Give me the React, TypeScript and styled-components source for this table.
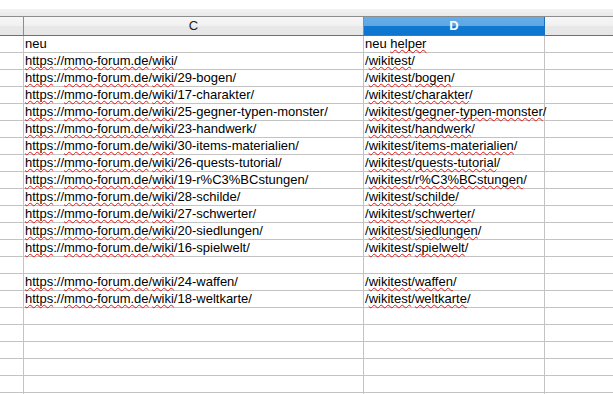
import React from 'react'
import styled, { createGlobalStyle } from 'styled-components'

const GlobalStyle = createGlobalStyle`
  html, body {
    margin: 0;
    padding: 0;
    background: #ffffff;
  }
  body {
    font-family: "Liberation Sans", Arial, sans-serif;
    overflow: hidden;
  }
`

const COLS = '24px 340px 181px 1fr'

type Row = { cSlug?: string; dSlug?: string; head?: boolean }

const rows: Row[] = [
    { head: true },
    { cSlug: '', dSlug: '' },
    { cSlug: '29-bogen/', dSlug: 'bogen' },
    { cSlug: '17-charakter/', dSlug: 'charakter' },
    { cSlug: '25-gegner-typen-monster/', dSlug: 'gegner-typen-monster' },
    { cSlug: '23-handwerk/', dSlug: 'handwerk' },
    { cSlug: '30-items-materialien/', dSlug: 'items-materialien' },
    { cSlug: '26-quests-tutorial/', dSlug: 'quests-tutorial' },
    { cSlug: '19-r%C3%BCstungen/', dSlug: 'r%C3%BCstungen' },
    { cSlug: '28-schilde/', dSlug: 'schilde' },
    { cSlug: '27-schwerter/', dSlug: 'schwerter' },
    { cSlug: '20-siedlungen/', dSlug: 'siedlungen' },
    { cSlug: '16-spielwelt/', dSlug: 'spielwelt' },
    {},
    { cSlug: '24-waffen/', dSlug: 'waffen' },
    { cSlug: '18-weltkarte/', dSlug: 'weltkarte' },
]

const Sheet = styled.div`
    width: 613px;
    height: 394px;
    overflow: hidden;
    display: flex;
    flex-direction: column;
    & > * {
        flex-shrink: 0;
    }
`

const Toolbar = styled.div`
    height: 9px;
    background: #ffffff;
`

const ToolStrip = styled.div`
    height: 7px;
    background: linear-gradient(#f2f2f2, #e9e9e9);
`

const HeaderRow = styled.div`
    display: grid;
    grid-template-columns: ${COLS};
    height: 18px;
    border-top: 1px solid #8d8d8d;
    border-bottom: 1px solid #6f6f6f;
`

const HeadCell = styled.div<{ $selected?: boolean }>`
    border-right: 1px solid ${p => (p.$selected ? '#1a6fc0' : '#8d8d8d')};
    background: ${p =>
        p.$selected
            ? 'linear-gradient(#66ade8 0, #5ea7e4 50%, #0f78d2 50%, #0e76cf 100%)'
            : 'linear-gradient(#f6f6f6 0, #f0f0f0 50%, #e8e8e8 50%, #e6e6e6 100%)'};
    color: ${p => (p.$selected ? '#ffffff' : '#222222')};
    font-weight: ${p => (p.$selected ? 'bold' : 'normal')};
    font-size: 13px;
    line-height: 18px;
    text-align: center;
    &:last-child {
        border-right: none;
    }
`

const BodyRow = styled.div`
    display: grid;
    grid-template-columns: ${COLS};
    height: 16px;
    border-bottom: 1px solid #c3c3c3;
`

const Cell = styled.div`
    border-right: 1px solid #c3c3c3;
    font-size: 13px;
    line-height: 16px;
    padding-left: 1px;
    color: #000000;
    white-space: nowrap;
    &:last-child {
        border-right: none;
    }
`

// spell-check squiggle
const Typo = styled.span`
    text-decoration: underline wavy #e01818;
    text-decoration-thickness: 1px;
    text-underline-offset: 1px;
    text-decoration-skip-ink: none;
`

const CUrl = ({ slug }: { slug: string }) => (
    <>
        <Typo>https</Typo>://<Typo>mmo-forum.de</Typo>/<Typo>wiki</Typo>/{slug}
    </>
)

const DPath = ({ slug }: { slug: string }) => (
    <>
        /<Typo>wikitest</Typo>/{slug ? <><Typo>{slug}</Typo>/</> : null}
    </>
)

export default function App() {
    const empties = Array.from({ length: 8 })
    return (
        <>
            <GlobalStyle />
            <Sheet>
                <Toolbar />
                <ToolStrip />
                <HeaderRow>
                    <HeadCell />
                    <HeadCell>C</HeadCell>
                    <HeadCell $selected>D</HeadCell>
                    <HeadCell />
                </HeaderRow>
                {rows.map((r, i) => (
                    <BodyRow key={i}>
                        <Cell />
                        <Cell>
                            {r.head ? 'neu' : r.cSlug !== undefined ? <CUrl slug={r.cSlug} /> : null}
                        </Cell>
                        <Cell>
                            {r.head ? (
                                <>neu <Typo>helper</Typo></>
                            ) : r.dSlug !== undefined ? (
                                <DPath slug={r.dSlug} />
                            ) : null}
                        </Cell>
                        <Cell />
                    </BodyRow>
                ))}
                {empties.map((_, i) => (
                    <BodyRow key={'e' + i}>
                        <Cell />
                        <Cell />
                        <Cell />
                        <Cell />
                    </BodyRow>
                ))}
            </Sheet>
        </>
    )
}
